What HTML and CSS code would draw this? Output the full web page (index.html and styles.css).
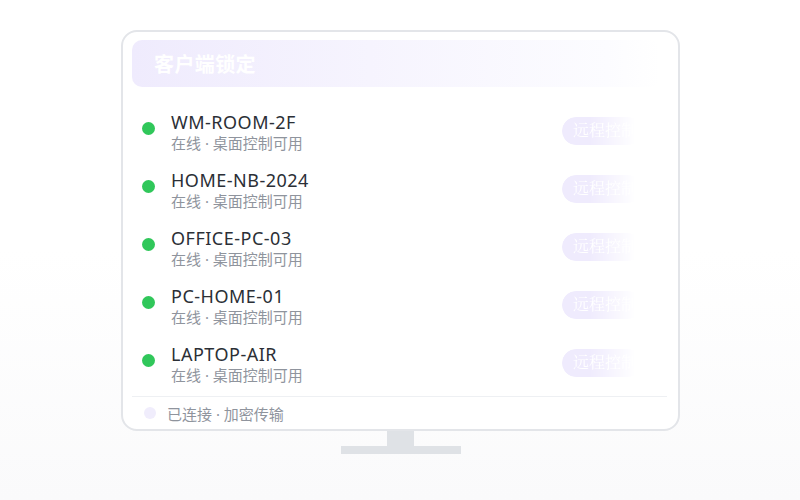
FILE: index.html
```html
<!DOCTYPE html>
<html lang="zh">
<head>
<meta charset="utf-8">
<link rel="stylesheet" href="styles.css">
</head>
<body>
<div class="stage">
  <div class="monitor">
    <div class="screen">
      <div class="header">客户端锁定</div>
      <div class="list">
        <div class="row">
          <span class="dot"></span>
          <div class="info"><div class="name">WM-ROOM-2F</div><div class="sub">在线 · 桌面控制可用</div></div>
          <span class="btn">远程控制</span>
        </div>
        <div class="row">
          <span class="dot"></span>
          <div class="info"><div class="name">HOME-NB-2024</div><div class="sub">在线 · 桌面控制可用</div></div>
          <span class="btn">远程控制</span>
        </div>
        <div class="row">
          <span class="dot"></span>
          <div class="info"><div class="name">OFFICE-PC-03</div><div class="sub">在线 · 桌面控制可用</div></div>
          <span class="btn">远程控制</span>
        </div>
        <div class="row">
          <span class="dot"></span>
          <div class="info"><div class="name">PC-HOME-01</div><div class="sub">在线 · 桌面控制可用</div></div>
          <span class="btn">远程控制</span>
        </div>
        <div class="row">
          <span class="dot"></span>
          <div class="info"><div class="name">LAPTOP-AIR</div><div class="sub">在线 · 桌面控制可用</div></div>
          <span class="btn">远程控制</span>
        </div>
      </div>
      <div class="footer">
        <span class="fdot"></span>
        <span class="ftext">已连接 · 加密传输</span>
      </div>
    </div>
    <div class="neck"></div>
    <div class="base"></div>
  </div>
</div>
</body>
</html>
```

FILE: styles.css
```css
html, body {
  margin: 0;
  padding: 0;
}
body {
  width: 800px;
  height: 500px;
  overflow: hidden;
  background: linear-gradient(180deg, #ffffff 0%, #ffffff 50%, #fafafb 100%);
  font-family: "Noto Sans", "Noto Sans CJK SC", sans-serif;
}
.stage {
  display: flex;
  justify-content: center;
  padding-top: 30px;
  padding-left: 1px;
}
.monitor {
  display: flex;
  flex-direction: column;
  align-items: center;
}
.screen {
  box-sizing: border-box;
  width: 559px;
  height: 401px;
  border: 2px solid #e3e5e9;
  border-radius: 16px;
  background: #ffffff;
  padding: 8px 10px 0 9px;
  display: flex;
  flex-direction: column;
}
.header {
  height: 47px;
  border-radius: 10px;
  background: linear-gradient(90deg, #efebfd 0%, #f6f4fe 45%, #fcfcff 90%, rgba(255,255,255,0) 100%);
  color: #ffffff;
  font-family: "Noto Sans CJK SC", sans-serif;
  font-size: 20px;
  font-weight: 700;
  letter-spacing: 0.4px;
  line-height: 47px;
  padding-left: 22px;
  margin-right: 8px;
}
.list {
  margin-top: 16px;
  display: flex;
  flex-direction: column;
}
.row {
  height: 58px;
  display: flex;
  align-items: center;
}
.dot {
  width: 13px;
  height: 13px;
  border-radius: 50%;
  background: #30c75a;
  margin-left: 10px;
  margin-right: 16px;
  margin-bottom: 8px;
  flex: none;
}
.info {
  flex: 1;
  display: flex;
  flex-direction: column;
}
.name {
  font-size: 18px;
  line-height: 22px;
  color: #2b2f36;
  letter-spacing: 0.5px;
}
.sub {
  font-size: 15px;
  line-height: 20px;
  color: #8f949d;
}
.btn {
  flex: none;
  width: 80px;
  height: 28px;
  box-sizing: border-box;
  border-radius: 14px;
  padding-left: 11px;
  margin-right: 26px;
  margin-bottom: 2px;
  background: #efebfd;
  color: #ffffff;
  font-family: "Liberation Serif", "Noto Serif CJK SC", serif;
  font-size: 16px;
  line-height: 28px;
  white-space: nowrap;
  overflow: hidden;
  -webkit-mask-image: linear-gradient(90deg, #000 35%, rgba(0,0,0,0) 92%);
  mask-image: linear-gradient(90deg, #000 35%, rgba(0,0,0,0) 92%);
}
.footer {
  margin-top: 3px;
  border-top: 1px solid #eef0f3;
  height: 33px;
  display: flex;
  align-items: center;
  margin-right: 1px;
}
.fdot {
  width: 12px;
  height: 12px;
  border-radius: 50%;
  background: #f0edfc;
  margin-left: 12px;
  margin-right: 11px;
}
.ftext {
  font-size: 15px;
  color: #8f949d;
}
.neck {
  width: 27px;
  height: 15px;
  background: #dfe2e6;
}
.base {
  width: 120px;
  height: 8px;
  background: #dfe2e6;
}
```
